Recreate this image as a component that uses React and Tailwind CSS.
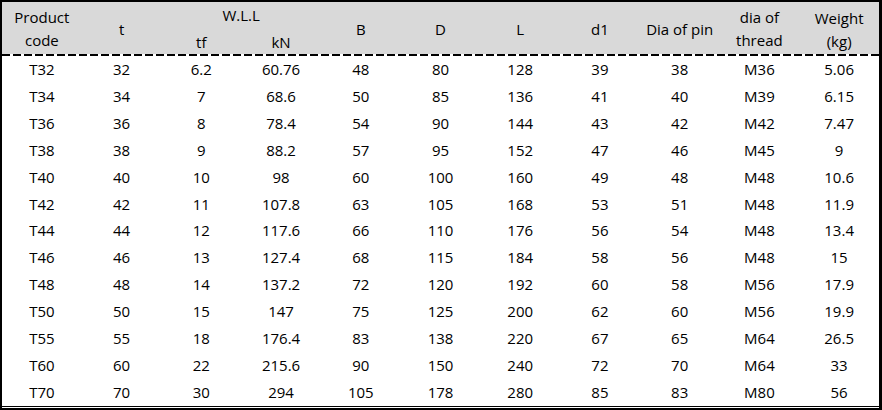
import React from "react";

const rows = [
  ["T32", "32", "6.2", "60.76", "48", "80", "128", "39", "38", "M36", "5.06"],
  ["T34", "34", "7", "68.6", "50", "85", "136", "41", "40", "M39", "6.15"],
  ["T36", "36", "8", "78.4", "54", "90", "144", "43", "42", "M42", "7.47"],
  ["T38", "38", "9", "88.2", "57", "95", "152", "47", "46", "M45", "9"],
  ["T40", "40", "10", "98", "60", "100", "160", "49", "48", "M48", "10.6"],
  ["T42", "42", "11", "107.8", "63", "105", "168", "53", "51", "M48", "11.9"],
  ["T44", "44", "12", "117.6", "66", "110", "176", "56", "54", "M48", "13.4"],
  ["T46", "46", "13", "127.4", "68", "115", "184", "58", "56", "M48", "15"],
  ["T48", "48", "14", "137.2", "72", "120", "192", "60", "58", "M56", "17.9"],
  ["T50", "50", "15", "147", "75", "125", "200", "62", "60", "M56", "19.9"],
  ["T55", "55", "18", "176.4", "83", "138", "220", "67", "65", "M64", "26.5"],
  ["T60", "60", "22", "215.6", "90", "150", "240", "72", "70", "M64", "33"],
  ["T70", "70", "30", "294", "105", "178", "280", "85", "83", "M80", "56"],
];

const HeadCell = ({ className = "", children }) => (
  <div className={`flex items-center justify-center ${className}`}>{children}</div>
);

const App = () => {
  return (
    <div className="w-[882px] h-[410px] bg-white overflow-hidden font-['Open_Sans',Arial,sans-serif] text-[15px] text-black">
      <div className="flex h-full flex-col border-l-2 border-r-[3px] border-t-2 border-black">
        <div className="grid h-[52px] grid-cols-11 grid-rows-2 bg-[#d9d9d9] leading-none">
          <div className="row-span-2 flex flex-col items-center justify-center gap-[8px] pt-[1px]">
            <span>Product</span>
            <span>code</span>
          </div>
          <HeadCell className="row-span-2 pt-[2px]">t</HeadCell>
          <HeadCell className="col-span-2 pt-[1px]">W.L.L</HeadCell>
          <HeadCell className="row-span-2 pt-[2px]">B</HeadCell>
          <HeadCell className="row-span-2 pt-[2px]">D</HeadCell>
          <HeadCell className="row-span-2 pt-[2px]">L</HeadCell>
          <HeadCell className="row-span-2 pt-[2px]">d1</HeadCell>
          <HeadCell className="row-span-2 pt-[2px]">Dia of pin</HeadCell>
          <div className="row-span-2 flex flex-col items-center justify-center gap-[8px] pt-[1px]">
            <span>dia of</span>
            <span>thread</span>
          </div>
          <div className="row-span-2 flex flex-col items-center justify-center gap-[8px] pt-[3px]">
            <span>Weight</span>
            <span>(kg)</span>
          </div>
          <HeadCell className="pt-[2px]">tf</HeadCell>
          <HeadCell className="pt-[2px]">kN</HeadCell>
        </div>

        <div className="h-[2px] bg-[repeating-linear-gradient(90deg,#000_0_8px,transparent_8px_11px)]" />

        <div className="flex flex-1 flex-col">
          {rows.map((row) => (
            <div key={row[0]} className="grid flex-1 grid-cols-11 items-center">
              {row.map((cell, i) => (
                <div key={i} className="text-center leading-none">
                  {cell}
                </div>
              ))}
            </div>
          ))}
        </div>

        <div className="h-px bg-black" />
        <div className="h-px bg-white" />
        <div className="h-[2px] bg-black" />
      </div>
    </div>
  );
};

export default App;
